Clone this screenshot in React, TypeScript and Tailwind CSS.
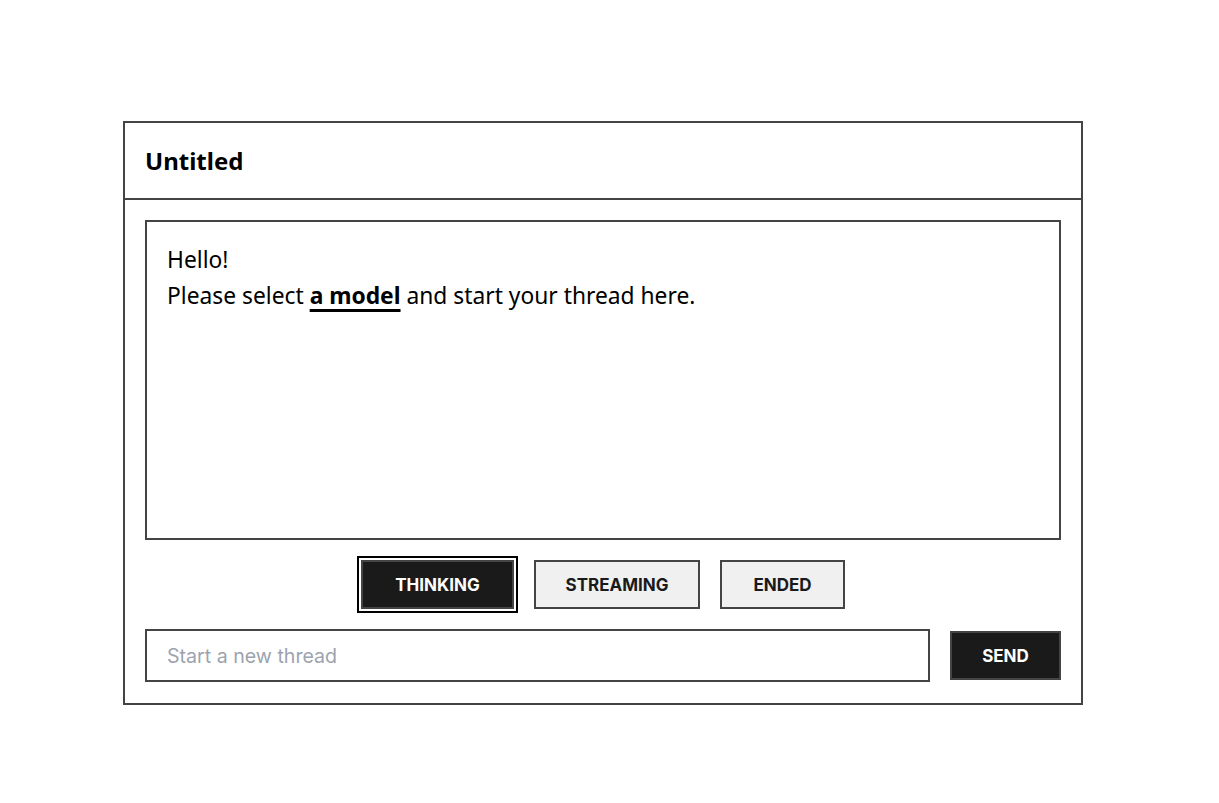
import React, { useState } from "react";

const STATES = [
  { label: "THINKING", w: "w-[153px]" },
  { label: "STREAMING", w: "w-[166px]" },
  { label: "ENDED", w: "w-[125px]" },
];

export default function App() {
  const [state, setState] = useState("THINKING");
  const [text, setText] = useState("");

  return (
    <div className="min-h-screen bg-white pt-[121px] pl-[123px] font-['Noto_Sans',sans-serif] text-black">
      <div className="w-[960px] border-2 border-[#444]">
        <div className="h-[77px] border-b-2 border-[#444] px-[20px] flex items-center">
          <h1 className="text-[24px] font-bold">Untitled</h1>
        </div>

        <div className="px-5 pt-5 pb-[21px] flex flex-col gap-5">
          <div className="h-[320px] border-2 border-[#444] px-5 pt-[20px] text-[22.8px] leading-[36px]">
            <div>Hello!</div>
            <div>
              Please select{" "}
              <a href="#" className="font-bold underline decoration-[3px] underline-offset-[5px]">
                a model
              </a>{" "}
              and start your thread here.
            </div>
          </div>

          <div className="flex justify-center gap-5 font-['Inter',sans-serif]">
            {STATES.map((s) => (
              <button
                key={s.label}
                onClick={() => setState(s.label)}
                className={
                  s.label === state
                    ? `${s.w} h-[49px] pt-[2px] border-2 border-[#444] bg-[#1a1a1a] text-white text-[17px] font-bold outline-2 outline-black outline-offset-2`
                    : `${s.w} h-[49px] pt-[2px] border-2 border-[#444] bg-[#f0f0f0] text-[#1a1a1a] text-[17px] font-bold`
                }
              >
                {s.label}
              </button>
            ))}
          </div>

          <div className="flex items-center gap-5">
            <input
              value={text}
              onChange={(e) => setText(e.target.value)}
              placeholder="Start a new thread"
              className="flex-1 h-[53px] border-2 border-[#444] px-5 text-[19.6px] font-['Inter',sans-serif] placeholder:text-[#9ca3af] outline-none"
            />
            <button className="w-[111px] h-[49px] pt-[2px] border-2 border-[#444] bg-[#1a1a1a] text-white text-[17px] font-bold font-['Inter',sans-serif]">
              SEND
            </button>
          </div>
        </div>
      </div>
    </div>
  );
}
